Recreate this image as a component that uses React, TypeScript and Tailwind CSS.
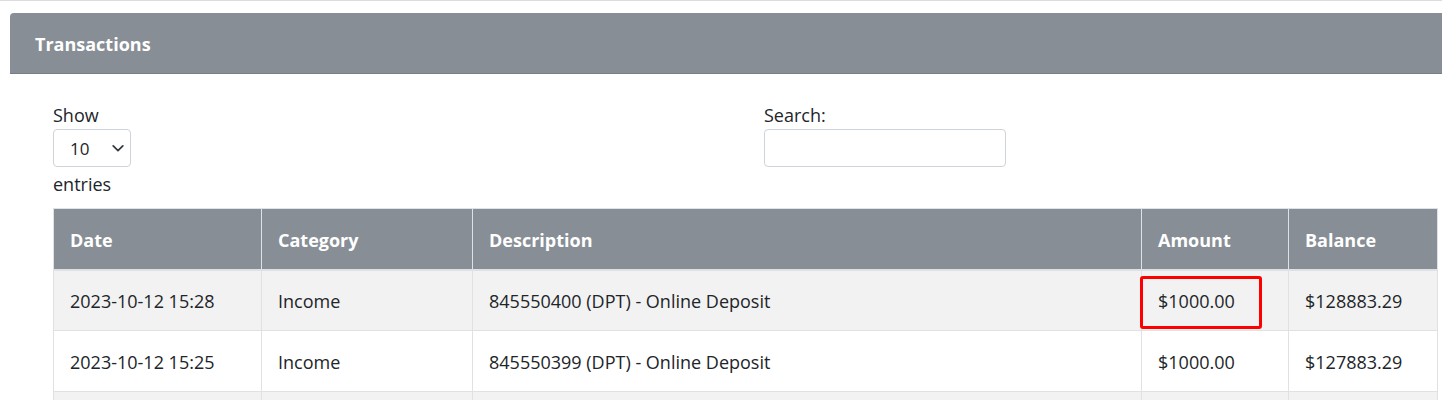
import React from 'react'

const rows = [
  {
    date: '2023-10-12 15:28',
    category: 'Income',
    description: '845550400 (DPT) - Online Deposit',
    amount: '$1000.00',
    balance: '$128883.29',
    marked: true,
  },
  {
    date: '2023-10-12 15:25',
    category: 'Income',
    description: '845550399 (DPT) - Online Deposit',
    amount: '$1000.00',
    balance: '$127883.29',
    marked: false,
  },
  {
    date: '2023-10-12 15:20',
    category: 'Income',
    description: '845550398 (DPT) - Online Deposit',
    amount: '$1000.00',
    balance: '$126883.29',
    marked: false,
  },
]

const App: React.FC = () => {
  return (
    <div
      className="h-[400px] w-full overflow-hidden bg-white text-[18px] leading-[27px] text-[#212529]"
      style={{ fontFamily: '"Open Sans", "Noto Sans", sans-serif' }}
    >
      {/* Top divider */}
      <div className="h-px w-full bg-[#dcdcdc]"></div>

      {/* Card */}
      <div className="ml-[10px] mt-[12px] w-[1450px]">
        {/* Card Header */}
        <div className="flex h-[61px] items-center rounded-tl-[4px] border-b border-[#767d84] bg-[#878e95] pl-[25px] pt-[2px]">
          <h2 className="text-[18px] font-bold text-white">Transactions</h2>
        </div>

        {/* Card Body */}
        <div className="pl-[43px] pt-[28px]">
          {/* Controls */}
          <div className="flex">
            <div className="w-[711px]">
              <div>Show</div>
              <div className="flex h-[38px] w-[78px] items-center justify-between rounded-[4px] border border-[#ced4da] bg-white pl-[16px] pr-[5px] text-[17px]">
                <span>10</span>
                <svg width="14" height="14" viewBox="0 0 16 16" fill="none">
                  <path
                    d="M2.5 5.5 8 11l5.5-5.5"
                    stroke="#343a40"
                    strokeWidth="2"
                    strokeLinecap="round"
                    strokeLinejoin="round"
                  />
                </svg>
              </div>
              <div className="mt-[4px]">entries</div>
            </div>
            <div>
              <div>Search:</div>
              <div className="h-[38px] w-[242px] rounded-[4px] border border-[#ced4da] bg-white"></div>
            </div>
          </div>

          {/* Table */}
          <table className="mt-[10px] w-[1384px] table-fixed border-collapse">
            <colgroup>
              <col className="w-[208px]" />
              <col className="w-[211px]" />
              <col className="w-[669px]" />
              <col className="w-[147px]" />
              <col className="w-[149px]" />
            </colgroup>
            <thead>
              <tr className="bg-[#878e95] text-left text-white">
                {['Date', 'Category', 'Description', 'Amount', 'Balance'].map((h) => (
                  <th
                    key={h}
                    className="h-[61px] border-x border-t border-b-2 border-[#dee2e6] px-4 pt-[3px] align-middle font-bold"
                  >
                    {h}
                  </th>
                ))}
              </tr>
            </thead>
            <tbody>
              {rows.map((r, i) => (
                <tr key={r.description} className={i % 2 === 0 ? 'bg-[#f2f2f2]' : 'bg-white'}>
                  <td className="h-[61px] border border-[#dee2e6] px-4 pt-[2px] align-middle">{r.date}</td>
                  <td className="border border-[#dee2e6] px-4 pt-[2px] align-middle">{r.category}</td>
                  <td className="border border-[#dee2e6] px-4 pt-[2px] align-middle">{r.description}</td>
                  <td className="relative border border-[#dee2e6] px-4 pt-[2px] align-middle">
                    {r.amount}
                    {r.marked && (
                      <div className="absolute left-[-2px] top-[5px] h-[53px] w-[122px] rounded-[3px] border-[3px] border-[#ff0000]"></div>
                    )}
                  </td>
                  <td className="border border-[#dee2e6] px-4 pt-[2px] align-middle">{r.balance}</td>
                </tr>
              ))}
            </tbody>
          </table>
        </div>
      </div>
    </div>
  )
}

export default App
